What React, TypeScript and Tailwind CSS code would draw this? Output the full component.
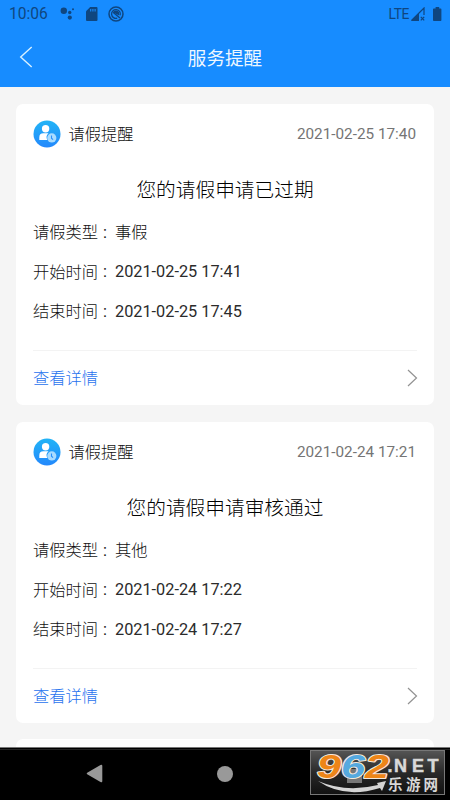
const reminders = [
  {
    title: '您的请假申请已过期',
    date: '2021-02-25 17:40',
    rows: [
      ['请假类型', '事假'],
      ['开始时间', '2021-02-25 17:41'],
      ['结束时间', '2021-02-25 17:45'],
    ],
  },
  {
    title: '您的请假申请审核通过',
    date: '2021-02-24 17:21',
    rows: [
      ['请假类型', '其他'],
      ['开始时间', '2021-02-24 17:22'],
      ['结束时间', '2021-02-24 17:27'],
    ],
  },
];

function StatusBar() {
  return (
    <div className="flex h-7 items-center px-[9px] font-normal text-[#0f4680]">
      <span className="w-[51px] text-[15.6px] leading-7">10:06</span>
      <svg width="15" height="14" viewBox="0 0 15 14" className="fill-current">
        <circle cx="3.8" cy="3.8" r="3.2" />
        <circle cx="9.7" cy="5.5" r="1.7" />
        <circle cx="13" cy="2.3" r="1" />
        <circle cx="9.8" cy="10.6" r="2.1" />
      </svg>
      <svg width="12" height="14" viewBox="0 0 12 14" className="ml-[11px]">
        <path d="M4.2 0H10.5Q11.5 0 11.5 1V13Q11.5 14 10.5 14H1Q0 14 0 13V4.2Z" fill="currentColor" />
        <path d="M4.7 2V4.5M6.9 2V4.5M9.1 2V4.5" stroke="#178cff" strokeWidth="1.1" />
      </svg>
      <svg width="16" height="16" viewBox="0 0 16 16" className="ml-[9.5px]" fill="none" stroke="currentColor">
        <circle cx="8" cy="8" r="7" strokeWidth="1.5" />
        <path d="M12.2 9.2A4.4 4.4 0 1 0 9.2 12.2" strokeWidth="1.3" />
        <path d="M4.8 6.2A3.7 3.7 0 0 1 11 6L11.4 9.6Z" fill="currentColor" stroke="none" />
        <path d="M5 6.2L12 12" strokeWidth="1.4" />
      </svg>
      <span className="ml-auto text-[13.8px] leading-7 tracking-[-0.4px]">LTE</span>
      <svg width="15" height="14" viewBox="0 0 15 14" className="ml-[2px]">
        <path d="M0.5 13.5L13 1V8" fill="none" stroke="currentColor" strokeWidth="1.2" />
        <path d="M0 14L8 6V14Z" fill="currentColor" />
        <path d="M9.8 9.8L13.2 13.4M13.2 9.8L9.8 13.4" stroke="currentColor" strokeWidth="1.2" />
      </svg>
      <svg width="9" height="14" viewBox="0 0 9 14" className="ml-[7px] mr-[-1px] fill-current">
        <path d="M2.6 0H6.2V1.4H7.6Q8.4 1.4 8.4 2.2V13Q8.4 14 7.6 14H0.8Q0 14 0 13V2.2Q0 1.4 0.8 1.4H2.6Z" />
      </svg>
    </div>
  );
}

function LeaveIcon() {
  return (
    <svg width="28" height="28" viewBox="0 0 28 28" className="ml-[-0.5px]">
      <defs>
        <linearGradient id="leave" x1="0" y1="0" x2="0" y2="1">
          <stop offset="0" stopColor="#22b4f6" />
          <stop offset="1" stopColor="#2388fc" />
        </linearGradient>
      </defs>
      <circle cx="14" cy="14" r="13.5" fill="url(#leave)" />
      <circle cx="12.6" cy="8.8" r="3.7" fill="white" />
      <path d="M6.3 20V17.5Q6.3 13.3 10.3 13.3H15.5A5.5 5.5 0 0 0 14.3 20Z" fill="white" />
      <circle cx="18.8" cy="17.9" r="4.6" fill="#a9dcff" />
      <path d="M18.5 15.5V18.2L20 19.7" fill="none" stroke="#268ffb" strokeWidth="1.1" />
    </svg>
  );
}

function ReminderCard({ item }: { item: (typeof reminders)[number] }) {
  return (
    <section className="flex h-[301px] shrink-0 flex-col rounded-[7px] bg-white px-[17px]">
      <div className="flex h-[60px] items-center">
        <LeaveIcon />
        <span className="ml-2 pt-[3px] text-[16.3px] text-[#111]">请假提醒</span>
        <span className="ml-auto mr-px pt-px text-[15.3px] font-normal text-[#757575]">{item.date}</span>
      </div>
      <h2 className="flex h-[49px] items-center justify-center pt-[5px] text-[19.7px] text-black">{item.title}</h2>
      <div className="h-[137px] text-[16.3px] text-[#111]">
        {item.rows.map(([label, value]) => (
          <div key={label} className="flex h-[39.5px] items-center">
            <span className="w-[70px] shrink-0 pt-px">{label}</span>
            <span className="w-[12px] shrink-0 font-normal">:</span>
            <span className={value.startsWith('2') ? 'font-normal text-[#2b2b2b]' : 'pt-px'}>{value}</span>
          </div>
        ))}
      </div>
      <div className="flex h-[55px] items-center justify-between border-t border-[#f3f3f3] text-[16.3px] text-[#1f72ee]">
        <span className="pt-[3px]">查看详情</span>
        <svg width="11" height="18" viewBox="0 0 11 18" className="mr-[-1px]">
          <path d="M1 1L9.5 9L1 17" fill="none" stroke="#929292" strokeWidth="1.2" />
        </svg>
      </div>
    </section>
  );
}

function Watermark() {
  return (
    <svg width="135" height="45" viewBox="0 0 135 45" className="overflow-visible">
      <defs>
        <linearGradient id="plate" x1="0" y1="0" x2="0" y2="1">
          <stop offset="0" stopColor="#555" />
          <stop offset="0.5" stopColor="#292929" />
          <stop offset="1" stopColor="#111" />
        </linearGradient>
      </defs>
      <rect x="0.5" y="0.5" width="134" height="44" fill="url(#plate)" stroke="#777" />
      <rect x="37" y="19" width="15" height="14" fill="#777" />
      <g fontFamily="Liberation Sans" fontWeight="700" fontStyle="italic" fontSize="33" stroke="#f4e8dc" strokeWidth="2" paintOrder="stroke" strokeLinejoin="round">
        <text x="7" y="27.5" textLength="24" lengthAdjust="spacingAndGlyphs" fill="#ed8518">9</text>
        <text x="31" y="27.5" textLength="24" lengthAdjust="spacingAndGlyphs" fill="#55a9df">6</text>
        <text x="55" y="27.5" textLength="24" lengthAdjust="spacingAndGlyphs" fill="#ed8518">2</text>
      </g>
      <path d="M8 31Q36 43 68 35L67 33L76 31L72 41L70 38Q34 49 8 31Z" fill="#d4d4d4" />
      <g fill="#d8d8d8" fontWeight="700">
        <text x="77.5 84 102 117.5" y="21.8" fontFamily="Liberation Sans" fontSize="18" stroke="#d8d8d8" strokeWidth="0.5">.NET</text>
        <text x="78 96 113.5" y="40" fontFamily="Noto Sans CJK SC" fontSize="14.5">乐游网</text>
      </g>
    </svg>
  );
}

export default function App() {
  return (
    <main className="flex h-[800px] w-[450px] flex-col overflow-hidden bg-[#f5f5f5] font-['Roboto','Noto_Sans_CJK_SC',sans-serif] font-light">
      <header className="h-[87px] shrink-0 bg-[#178cff]">
        <StatusBar />
        <div className="grid h-[60px] grid-cols-[60px_1fr_60px] items-center">
          <svg width="14" height="22" viewBox="0 0 14 22" className="ml-[19px] mt-[-2px]">
            <path d="M12.7 1L1.7 11L12.7 21" fill="none" stroke="#d9f1ff" strokeWidth="1.4" />
          </svg>
          <h1 className="pt-[4px] text-center text-[18.6px] font-normal text-[#eef7ff]">服务提醒</h1>
        </div>
      </header>
      <div className="flex h-[660px] shrink-0 flex-col gap-4 overflow-hidden px-4 pt-[17px] [&>*:nth-child(2)]:mt-px">
        {reminders.map((item) => (
          <ReminderCard key={item.date} item={item} />
        ))}
        <div className="h-20 shrink-0 rounded-[7px] bg-white" />
      </div>
      <nav className="relative h-[53px] shrink-0 border-t border-[#777] bg-black">
        <div className="mt-px h-px bg-[#222]" />
        <div className="flex h-[49px] items-center">
          <svg width="17" height="19" viewBox="0 0 17 19" className="ml-[85.5px] mt-[-2px]">
            <path d="M1.6 8.5L14.5 1Q16.3 0.2 16.3 2V17Q16.3 19 14.5 18L1.6 10.5Q-0.2 9.5 1.6 8.5Z" fill="#999" />
          </svg>
          <span className="ml-[114.5px] mt-[-2px] h-4 w-4 rounded-full bg-[#999]" />
        </div>
        <div className="absolute left-[310px] top-[2px]">
          <Watermark />
        </div>
      </nav>
    </main>
  );
}
